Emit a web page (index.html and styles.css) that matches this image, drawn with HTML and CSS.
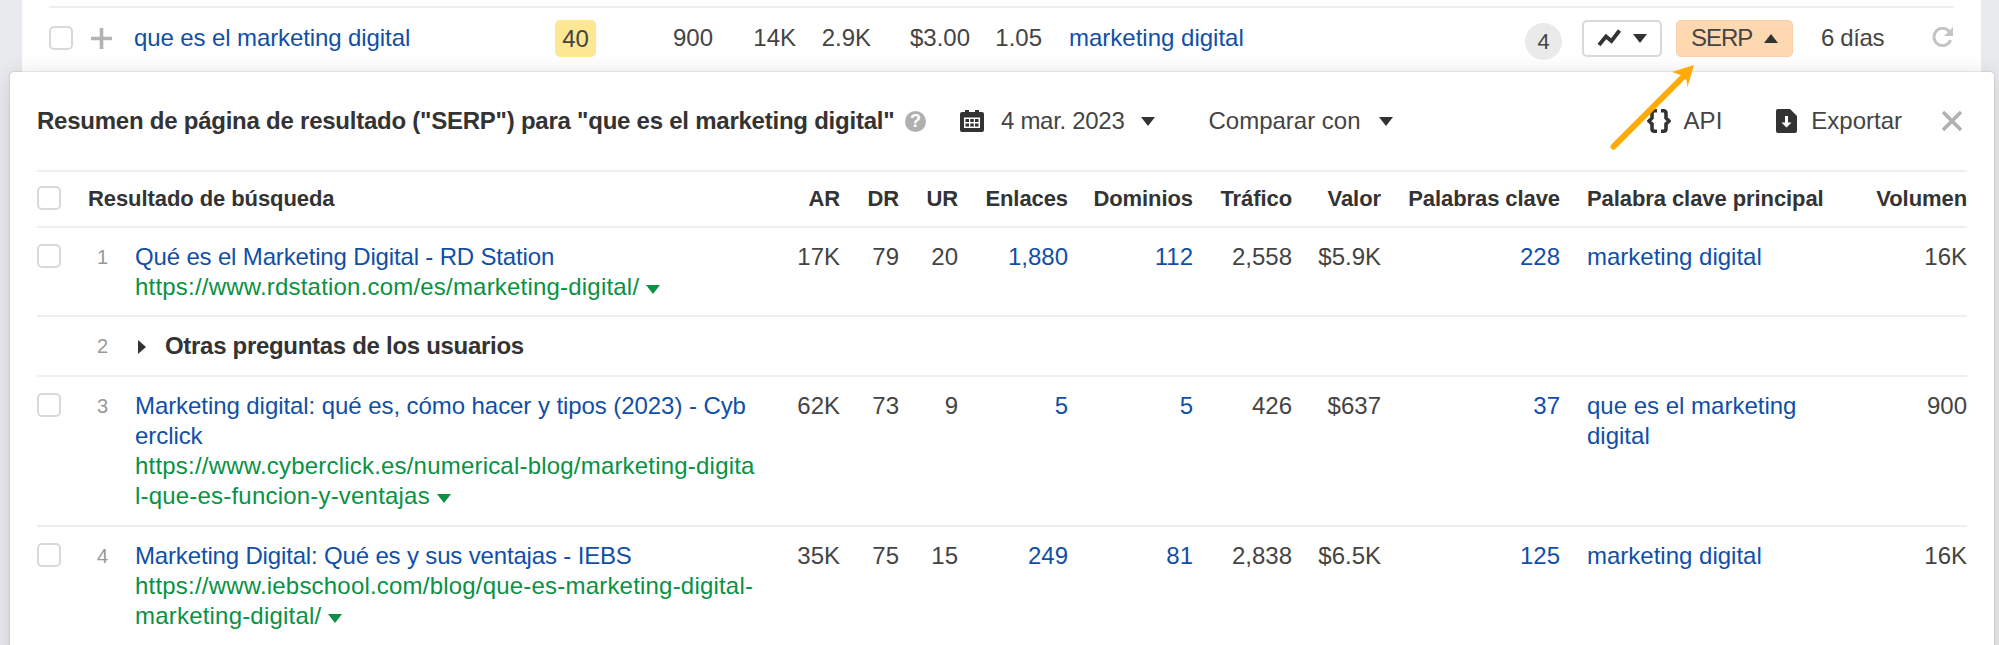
FILE: index.html
```html
<!DOCTYPE html>
<html lang="es">
<head>
  <meta charset="UTF-8" />
  <title>Resumen SERP</title>
  <link rel="stylesheet" href="styles.css">
</head>
<body>

  <!-- Keyword row -->
  <div class="sheet">
    <div class="keyword-row">
      <span class="checkbox"></span>
      <svg class="plus" width="21" height="21" viewBox="0 0 21 21"><path d="M10.5 0v21M0 10.5h21" stroke="#b3b3b3" stroke-width="3.6" /></svg>
      <a class="link keyword">que es el marketing digital</a>
      <span class="difficulty">40</span>
      <span class="num">900</span>
      <span class="num">14K</span>
      <span class="num">2.9K</span>
      <span class="num">$3.00</span>
      <span class="num">1.05</span>
      <a class="link parent">marketing digital</a>
      <span class="count">4</span>
      <span class="btn btn-chart">
        <svg width="24" height="18" viewBox="0 0 24 18"><path d="M2 16L9 7.500l5.500 4.500L22.500 1.500" fill="none" stroke="#333" stroke-width="3.800" /></svg>
        <i class="caret"></i>
      </span>
      <span class="btn btn-serp">SERP <i class="caret up"></i></span>
      <span class="updated">6 días</span>
      <svg class="refresh" width="21" height="21" viewBox="0 0 21 21"><path d="M17.500 4.800A8.600 8.600 0 1 0 18.600 13" fill="none" stroke="#c4c4c4" stroke-width="3" /><path d="M21 0v9h-9z" fill="#c4c4c4" /></svg>
    </div>
  </div>

  <!-- SERP overview -->
  <div class="panel">
    <div class="toolbar">
      <h2>Resumen de página de resultado ("SERP") para "que es el marketing digital"</h2>
      <span class="help">?</span>
      <div class="tool date">
        <svg width="24" height="22" viewBox="0 0 24 22"><path d="M2 2h3V0h4v2h6V0h4v2h3q2 0 2 2v16q0 2-2 2H2q-2 0-2-2V4q0-2 2-2z" fill="#333" /><path d="M4 7.500h16v10.500H4z" fill="#fff" /><path d="M5.500 9h3.500v3H5.500zm4.800 0h3.500v3h-3.500zm4.700 0h3.500v3H15zM5.500 13.500h3.500v3H5.500zm4.800 0h3.500v3h-3.500zm4.700 0h3.500v3H15z" fill="#333" /></svg>
        <span>4 mar. 2023</span>
        <i class="caret"></i>
      </div>
      <div class="tool compare"><span>Comparar con</span><i class="caret"></i></div>
      <div class="tool api">
        <svg width="24" height="24" viewBox="0 0 24 24"><path d="M10 1.800H7.500Q5 1.800 5 4.500V9l-3 3 3 3v4.500q0 2.700 2.500 2.700H10M14 1.800h2.500Q19 1.800 19 4.500V9l3 3-3 3v4.500q0 2.700-2.500 2.700H14" fill="none" stroke="#333" stroke-width="3.600" /></svg>
        <span>API</span>
      </div>
      <div class="tool export">
        <svg width="21" height="24" viewBox="0 0 21 24"><path d="M2 0h12l7 7v15q0 2-2 2H2q-2 0-2-2V2q0-2 2-2z" fill="#333" /><path d="M9 7h3v6.500h3.500l-5 5-5-5H9z" fill="#fff" /></svg>
        <span>Exportar</span>
      </div>
      <svg class="close" width="20" height="20" viewBox="0 0 20 20"><path d="M1 1l18 18M19 1L1 19" stroke="#b0b0b0" stroke-width="3.600" /></svg>
    </div>

    <table class="serp">
      <colgroup>
        <col class="c-check"><col class="c-pos"><col class="c-result"><col class="c-ar"><col class="c-dr"><col class="c-ur"><col class="c-links"><col class="c-domains"><col class="c-traffic"><col class="c-value"><col class="c-keywords"><col class="c-top"><col class="c-volume">
      </colgroup>
      <thead>
        <tr>
          <th><span class="checkbox"></span></th>
          <th class="left" colspan="2">Resultado de búsqueda</th>
          <th>AR</th>
          <th>DR</th>
          <th>UR</th>
          <th>Enlaces</th>
          <th>Dominios</th>
          <th>Tráfico</th>
          <th>Valor</th>
          <th>Palabras clave</th>
          <th class="top">Palabra clave principal</th>
          <th>Volumen</th>
        </tr>
      </thead>
      <tbody>
        <tr>
          <td><span class="checkbox"></span></td>
          <td class="pos">1</td>
          <td class="result">
            <a class="link">Qué es el Marketing Digital - RD Station</a><br>
            <a class="url">https://www.rdstation.com/es/marketing-digital/</a> <i class="caret green"></i>
          </td>
          <td>17K</td>
          <td>79</td>
          <td>20</td>
          <td class="link">1,880</td>
          <td class="link">112</td>
          <td>2,558</td>
          <td>$5.9K</td>
          <td class="link">228</td>
          <td class="top link">marketing digital</td>
          <td>16K</td>
        </tr>
        <tr>
          <td></td>
          <td class="pos">2</td>
          <td class="questions" colspan="11"><i class="expand"></i>Otras preguntas de los usuarios</td>
        </tr>
        <tr>
          <td><span class="checkbox"></span></td>
          <td class="pos">3</td>
          <td class="result wide">
            <a class="link">Marketing digital: qué es, cómo hacer y tipos (2023) - Cyb<br>erclick</a><br>
            <a class="url">https://www.cyberclick.es/numerical-blog/marketing-digita<br>l-que-es-funcion-y-ventajas</a> <i class="caret green"></i>
          </td>
          <td>62K</td>
          <td>73</td>
          <td>9</td>
          <td class="link">5</td>
          <td class="link">5</td>
          <td>426</td>
          <td>$637</td>
          <td class="link">37</td>
          <td class="top link">que es el marketing digital</td>
          <td>900</td>
        </tr>
        <tr>
          <td><span class="checkbox"></span></td>
          <td class="pos">4</td>
          <td class="result">
            <a class="link">Marketing Digital: Qué es y sus ventajas - IEBS</a><br>
            <a class="url">https://www.iebschool.com/blog/que-es-marketing-digital-<br>marketing-digital/</a> <i class="caret green"></i>
          </td>
          <td>35K</td>
          <td>75</td>
          <td>15</td>
          <td class="link">249</td>
          <td class="link">81</td>
          <td>2,838</td>
          <td>$6.5K</td>
          <td class="link">125</td>
          <td class="top link">marketing digital</td>
          <td>16K</td>
        </tr>
      </tbody>
    </table>
  </div>

  <!-- Arrow pointing at the SERP button -->
  <svg class="arrow" width="90" height="90" viewBox="0 0 90 90"><path d="M8.500 86.700L78 17" stroke="#ffaa05" stroke-width="6" stroke-linecap="round" /><path d="M89 5L67 12l8.500 3 6 5 1 7z" fill="#ffaa05" /></svg>

</body>
</html>
```
FILE: styles.css
```css
* {
  box-sizing: border-box;
}

body {
  margin: 0;
  height: 645px;
  overflow: hidden;
  position: relative;
  background: #e9eaed;
  color: #444;
  font: 24px/30px "Liberation Sans", Arial, sans-serif;
}

.link {
  color: #114fa7;
}

.url {
  color: #0b9143;
  letter-spacing: 0.2px;
}

.checkbox {
  display: block;
  width: 24px;
  height: 24px;
  border: 2px solid #d9d9d9;
  border-radius: 5px;
  background: #fff;
}

.caret {
  display: inline-block;
  border: 7px solid transparent;
  border-top: 9px solid #333;
  border-bottom: 0;
}
.caret.up {
  border-top: 0;
  border-bottom: 9px solid #333;
}
.caret.green {
  border-top-color: #0b9143;
  margin-bottom: 1px;
}

/* Keyword row */
.sheet {
  height: 72px;
  margin: 0 18px 0 22px;
  padding: 6px 27px 0;
  background: #fff;
}
.keyword-row {
  display: grid;
  grid-template-columns: 42px 43px 421px 41px 117px 83px 75px 99px 72px 483px 57px 94px 145px 111px 21px;
  align-items: center;
  height: 62px;
  border-top: 2px solid #eee;
}
.keyword {
  letter-spacing: -0.1px;
}
.num {
  text-align: right;
}
.parent {
  padding-left: 27px;
}
.difficulty {
  height: 37px;
  line-height: 38px;
  border-radius: 5px;
  background: #fde792;
  text-align: center;
}
.count {
  width: 37px;
  height: 37px;
  margin-top: 6px;
  border-radius: 50%;
  background: #eaeaea;
  font-size: 22px;
  line-height: 38px;
  text-align: center;
}
.btn {
  display: flex;
  align-items: center;
  justify-content: space-between;
  height: 37px;
  border-radius: 5px;
}
.btn-chart {
  width: 80px;
  padding: 0 13px;
  border: 2px solid #d9d9d9;
  background: #fff;
}
.btn-serp {
  width: 117px;
  padding: 0 14px;
  border: 1px solid #f5cfa8;
  background: #fed8b1;
  letter-spacing: -1px;
}
.updated {
  letter-spacing: -0.4px;
}
.refresh {
  margin-top: -1px;
}

/* Panel */
.panel {
  height: 600px;
  margin: 0 5px 0 10px;
  padding: 0 27px;
  border-radius: 4px 4px 0 0;
  background: #fff;
  box-shadow: 0 0 2px rgba(0, 0, 0, 0.25), 0 3px 24px rgba(0, 0, 0, 0.12);
}
.toolbar {
  display: flex;
  align-items: center;
  height: 98px;
}
.toolbar h2 {
  width: 868px;
  margin: 0;
  color: #333;
  font-size: 24px;
  letter-spacing: -0.24px;
  white-space: nowrap;
}
.help {
  width: 21px;
  height: 21px;
  border-radius: 50%;
  background: #b0b0b0;
  color: #fff;
  font-size: 18px;
  font-weight: bold;
  line-height: 21px;
  text-align: center;
}
.tool {
  display: flex;
  align-items: center;
}
.tool span {
  margin: 0 17px;
}
.date {
  margin-left: 34px;
}
.date span {
  letter-spacing: -0.3px;
}
.compare {
  margin-left: 36px;
}
.compare span {
  margin-right: 18px;
}
.api {
  margin-left: auto;
}
.api span {
  margin: 0 54px 0 13px;
}
.export span {
  margin: 0 40px 0 14px;
}
.close {
  margin-right: 5px;
}

/* Results table */
.serp {
  width: 1930px;
  table-layout: fixed;
  border-collapse: separate;
  border-spacing: 0;
}
.c-check { width: 51px; }
.c-pos { width: 47px; }
.c-result { width: 640px; }
.c-ar { width: 65px; }
.c-dr { width: 59px; }
.c-ur { width: 59px; }
.c-links { width: 110px; }
.c-domains { width: 125px; }
.c-traffic { width: 99px; }
.c-value { width: 89px; }
.c-keywords { width: 179px; }
.c-top { width: 267px; }

.serp th,
.serp td {
  padding: 14px 0 13px;
  border-top: 2px solid #eee;
  text-align: right;
  vertical-align: top;
}
.serp th {
  padding: 12px 0;
  color: #333;
  font-size: 22px;
  letter-spacing: -0.08px;
  white-space: nowrap;
}
.serp .checkbox {
  margin-top: 2px;
}
.serp .left,
.serp .result,
.serp .questions {
  text-align: left;
}
.serp .pos {
  padding-right: 27px;
  color: #999;
  font-size: 20px;
}
.serp .result {
  white-space: nowrap;
}
.result .link {
  letter-spacing: -0.16px;
}
.serp .wide {
  padding-bottom: 14px;
}
.wide .link {
  letter-spacing: -0.07px;
}
.serp .top {
  padding-left: 27px;
  padding-right: 20px;
  text-align: left;
}
.serp .questions {
  padding-bottom: 14px;
  color: #333;
  font-weight: bold;
  letter-spacing: -0.3px;
}
.expand {
  display: inline-block;
  margin: 0 19px 0 3px;
  border: 7px solid transparent;
  border-left: 8px solid #333;
  border-right: 0;
}

.arrow {
  position: absolute;
  top: 60px;
  left: 1605px;
}
```
